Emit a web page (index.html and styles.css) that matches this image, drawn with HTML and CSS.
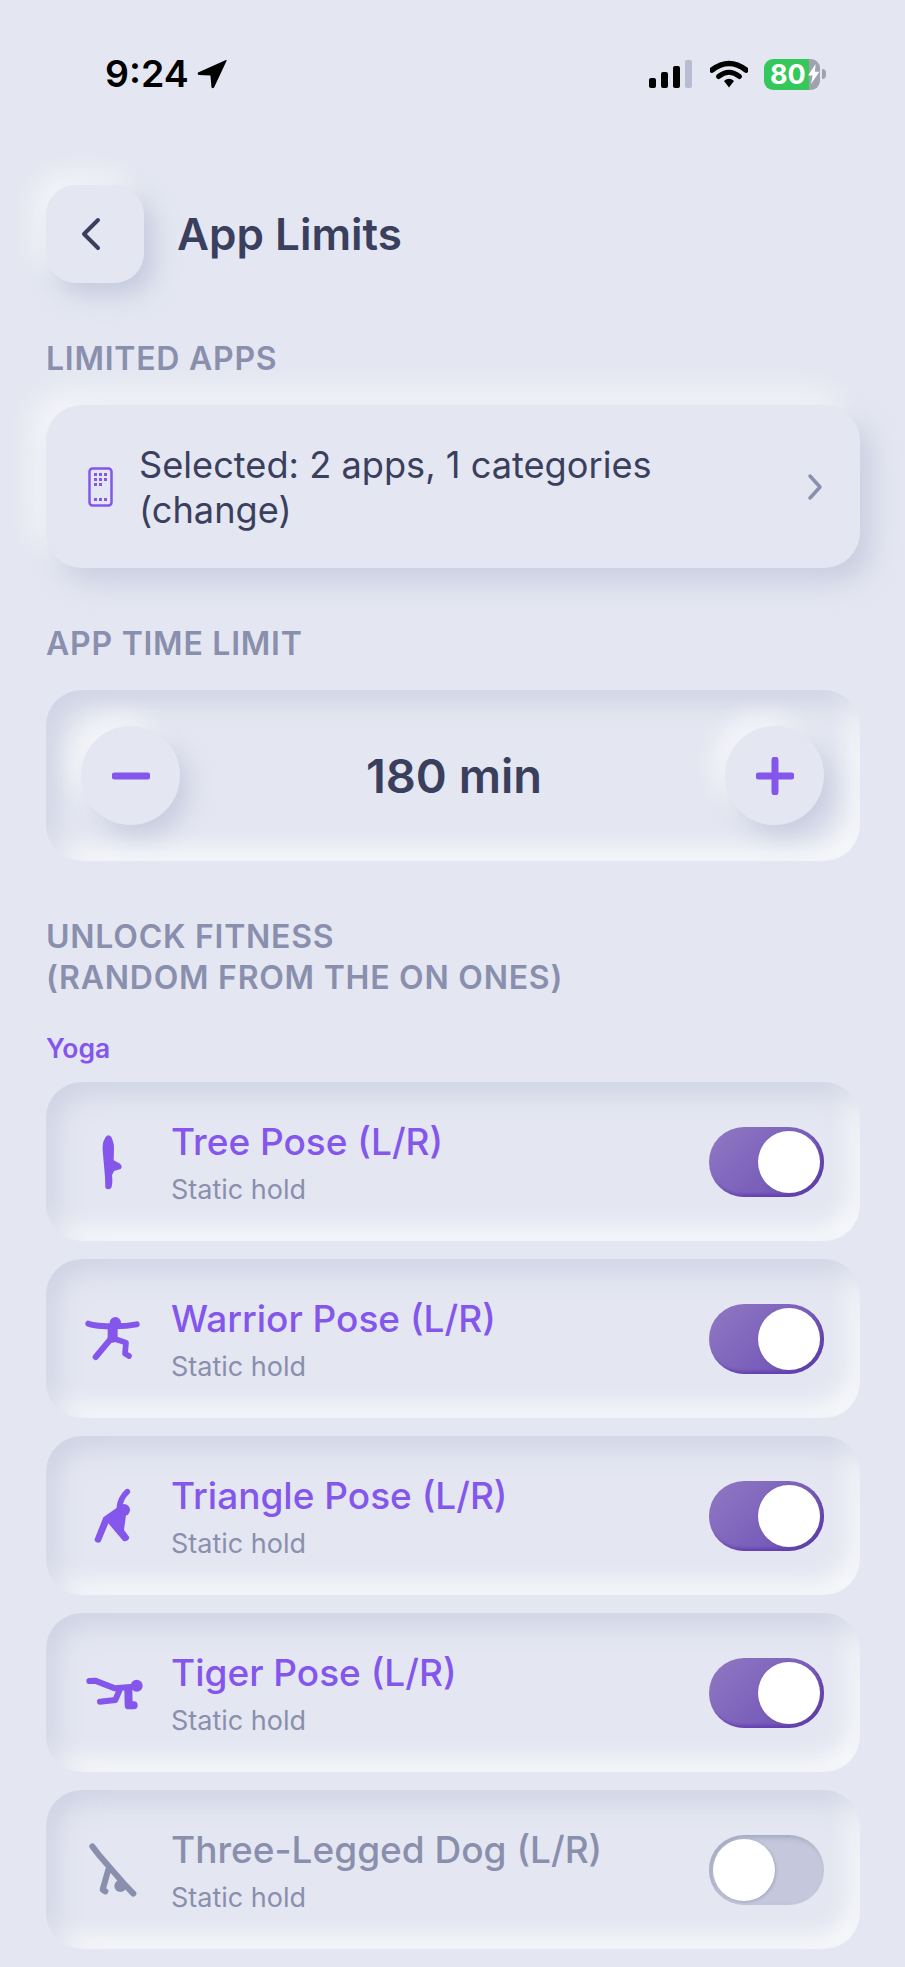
FILE: index.html
```html
<!DOCTYPE html>
<html lang="en">
<head>
<meta charset="utf-8">
<title>App Limits</title>
<link rel="stylesheet" href="styles.css">
</head>
<body>
<div class="page">
  <div class="status">
    <div class="status-left">
      <span class="time">9:24</span>
      <svg class="loc" viewBox="0 0 29 29"><path d="M28 1 L1 13 Q0 15 2 15.500 L13 16 L14 27.500 Q15 29 16.500 27.500 L28.500 2 Q29 0.500 28 1Z" fill="#000"/></svg>
    </div>
    <div class="status-right">
      <svg class="cell" viewBox="0 0 44 29"><rect x="0" y="18" width="7" height="10" rx="2" fill="#000"/><rect x="12" y="12" width="7" height="16" rx="2" fill="#000"/><rect x="24" y="6" width="7" height="22" rx="2" fill="#000"/><rect x="36" y="0" width="7" height="28" rx="2" fill="#b9bcd0"/></svg>
      <svg class="wifi" viewBox="0 0 38 29"><path d="M2 10 Q19 -3 36 10" fill="none" stroke="#000" stroke-width="5.500" stroke-linecap="round"/><path d="M8.500 16.500 Q19 8 29.500 16.500" fill="none" stroke="#000" stroke-width="5" stroke-linecap="round"/><path d="M14 21 Q19 16.500 24 21 L19 27.500Z" fill="#000"/></svg>
      <div class="battery">
        <div class="batt-body"><span class="batt-num">80</span><svg class="bolt" viewBox="0 0 16 26"><path d="M10 0 L0 15 H6 L4 26 L15 10 H9Z" fill="#fff"/></svg></div>
        <div class="batt-nub"></div>
      </div>
    </div>
  </div>

  <header class="header">
    <button class="back">
      <svg class="back-ico" viewBox="0 0 24 36"><path d="M19 4 L5 18 L19 32" fill="none" stroke="#3b3f5e" stroke-width="4" stroke-linecap="round" stroke-linejoin="round"/></svg>
    </button>
    <h1 class="title">App Limits</h1>
  </header>

  <div class="label">LIMITED APPS</div>
  <div class="picker">
    <svg class="phone" viewBox="0 0 25 40">
      <rect x="1.500" y="1.500" width="22" height="37" rx="3" fill="none" stroke="#8456ec" stroke-width="2.500"/>
      <g fill="#8456ec"><rect x="6" y="6" width="3" height="3"/><rect x="11" y="6" width="3" height="3"/><rect x="16" y="6" width="3" height="3"/><rect x="6" y="11" width="3" height="3"/><rect x="11" y="11" width="3" height="3"/><rect x="16" y="11" width="3" height="3"/><rect x="6" y="16" width="3" height="3"/><rect x="11" y="16" width="3" height="3"/><rect x="6" y="31" width="3" height="3"/><rect x="11" y="31" width="3" height="3"/><rect x="16" y="31" width="3" height="3"/></g>
    </svg>
    <div class="picker-text">Selected: 2 apps, 1 categories (change)</div>
    <svg class="chev" viewBox="0 0 18 28"><path d="M4 3 L14 14 L4 25" fill="none" stroke="#8a8fae" stroke-width="3.500" stroke-linecap="round" stroke-linejoin="round"/></svg>
  </div>

  <div class="label">APP TIME LIMIT</div>
  <div class="stepper">
    <button class="round">
      <svg class="step-ico" viewBox="0 0 38 38"><path d="M3 19 H35" stroke="#8456ec" stroke-width="7" stroke-linecap="round"/></svg>
    </button>
    <div class="value">180 min</div>
    <button class="round">
      <svg class="step-ico" viewBox="0 0 38 38"><path d="M3 19 H35 M19 3 V35" stroke="#8456ec" stroke-width="7" stroke-linecap="round"/></svg>
    </button>
  </div>

  <div class="label">UNLOCK FITNESS<br>(RANDOM FROM THE ON ONES)</div>
  <div class="group">Yoga</div>

  <div class="rows">
    <div class="row">
      <svg class="pose" viewBox="120 158 180 180"><path d="M197 170 Q205 160 214 170 L218 180 Q223 195 222 205 L221 240 L238 249 Q250 258 242 266 L222 272 L216 285 Q219 310 214 322 Q205 331 196 322 L195 290 L188 210 Q187 190 192 180Z" fill="#8456ec"/></svg>
      <div class="info"><div class="name">Tree Pose (L/R)</div><div class="sub">Static hold</div></div>
      <div class="toggle on"><span class="knob"></span></div>
    </div>
    <div class="row">
      <svg class="pose" viewBox="120 149 180 180"><g fill="none" stroke="#8456ec" stroke-linecap="round" stroke-linejoin="round"><path d="M145 190 Q165 198 225 198 Q260 198 290 192" stroke-width="18"/><path d="M212 236 L167 290" stroke-width="18"/><path d="M225 236 L258 247 L255 280 L267 287" stroke-width="17"/><path d="M218 205 V232" stroke-width="30"/></g><circle cx="226" cy="187" r="17" fill="#8456ec"/></svg>
      <div class="info"><div class="name">Warrior Pose (L/R)</div><div class="sub">Static hold</div></div>
      <div class="toggle on"><span class="knob"></span></div>
    </div>
    <div class="row">
      <svg class="pose" viewBox="120 141 180 180"><path d="M262 155 Q240 175 238 205" fill="none" stroke="#8456ec" stroke-width="17" stroke-linecap="round"/><circle cx="252" cy="210" r="18" fill="#8456ec"/><path d="M190 232 L235 200 L258 225 L252 270 L268 292 Q265 306 250 303 L205 250 L182 305 Q170 313 163 300Z" fill="#8456ec"/></svg>
      <div class="info"><div class="name">Triangle Pose (L/R)</div><div class="sub">Static hold</div></div>
      <div class="toggle on"><span class="knob"></span></div>
    </div>
    <div class="row">
      <svg class="pose" viewBox="120 132 180 180"><g fill="none" stroke="#8456ec" stroke-linecap="round" stroke-linejoin="round"><path d="M148 183 L165 182 L225 205 L280 200" stroke-width="18"/><path d="M238 212 L226 240 L180 245" stroke-width="18"/><path d="M265 212 L266 256 L281 256" stroke-width="24"/></g><circle cx="290" cy="197" r="18" fill="#8456ec"/></svg>
      <div class="info"><div class="name">Tiger Pose (L/R)</div><div class="sub">Static hold</div></div>
      <div class="toggle on"><span class="knob"></span></div>
    </div>
    <div class="row off">
      <svg class="pose" viewBox="120 154 180 180"><g fill="none" stroke="#8a8fae" stroke-linecap="round" stroke-linejoin="round"><path d="M157 170 L180 200 L250 280 L280 312" stroke-width="18"/><path d="M205 240 L188 300 L196 305" stroke-width="18"/></g><circle cx="241" cy="289" r="18" fill="#8a8fae"/></svg>
      <div class="info"><div class="name">Three-Legged Dog (L/R)</div><div class="sub">Static hold</div></div>
      <div class="toggle"><span class="knob"></span></div>
    </div>
  </div>
</div>
</body>
</html>
```
FILE: styles.css
```css
* { box-sizing: border-box; }
html, body { margin: 0; padding: 0; background: #e4e7f1; }
body { font-family: Inter, "Noto Sans", sans-serif; color: #3b3f5e; }
.page { width: 905px; height: 1967px; overflow: hidden; padding: 56px 45px 0 46px; }

.status { display: flex; justify-content: space-between; align-items: center; height: 36px; padding: 0 34px 0 59px; }
.status-left { display: flex; align-items: center; gap: 8px; }
.time { font-size: 37.5px; font-weight: 600; color: #000; line-height: 36px; }
.loc { width: 30px; height: 30px; margin-top: -1px; }
.status-right { display: flex; align-items: center; }
.cell { width: 44px; height: 29px; }
.wifi { width: 38px; height: 29px; margin-left: 17px; }
.battery { display: flex; align-items: center; margin-left: 16px; }
.batt-body { width: 56px; height: 31px; border-radius: 9px; display: flex; align-items: center; padding-left: 6px; background: linear-gradient(90deg, #34c759 0, #34c759 80%, #a0a2b0 80%); }
.batt-num { font-size: 27px; font-weight: 700; color: #fff; line-height: 31px; }
.bolt { width: 14px; height: 24px; margin-left: 2px; }
.batt-nub { width: 4px; height: 10px; margin-left: 2px; border-radius: 0 5px 5px 0; background: #a0a2b0; }

.header { display: flex; align-items: center; gap: 33px; margin-top: 93px; }
.back { width: 98px; height: 98px; border: 0; border-radius: 30px; background: #e4e7f1; padding: 0; display: flex; align-items: center; justify-content: center; box-shadow: 10px 12px 22px rgba(170, 176, 205, .5), -12px -12px 24px rgba(255, 255, 255, .6); }
.back-ico { width: 24px; height: 36px; margin-right: 9px; }
.title { margin: 0; font-size: 44px; line-height: 50px; font-weight: 600; color: #3b3f5e; }

.label { margin: 55px 0 26px; font-size: 32px; line-height: 41px; font-weight: 600; letter-spacing: .75px; color: #8a8fae; }

.picker { display: flex; align-items: center; height: 163px; border-radius: 36px; padding: 0 36px 0 42px; box-shadow: 12px 14px 26px rgba(170, 176, 205, .45), -14px -14px 28px rgba(255, 255, 255, .6); }
.phone { width: 25px; height: 40px; flex: none; }
.picker-text { flex: 1; margin-left: 26px; padding-top: 2px; font-size: 36.2px; line-height: 45px; color: #3b3f5e; }
.chev { width: 18px; height: 28px; flex: none; }

.stepper { display: flex; align-items: center; justify-content: space-between; height: 171px; border-radius: 36px; padding: 0 36px 0 35px; box-shadow: inset 10px 12px 24px rgba(170, 176, 205, .36), inset -10px -12px 22px rgba(255, 255, 255, .8); }
.round { width: 99px; height: 99px; border: 0; border-radius: 50%; padding: 0; background: #e4e7f1; display: flex; align-items: center; justify-content: center; box-shadow: 10px 12px 22px rgba(170, 176, 205, .45), -12px -12px 22px rgba(255, 255, 255, .6); }
.step-ico { width: 38px; height: 38px; }
.value { margin-left: 3px; font-size: 47px; font-weight: 600; line-height: 56px; color: #3b3f5e; }

.group { margin-top: 33px; font-size: 26.5px; line-height: 34px; font-weight: 600; color: #8456ec; }

.rows { display: flex; flex-direction: column; gap: 18px; margin-top: 17px; }
.row { display: flex; align-items: center; height: 159px; border-radius: 36px; padding: 2px 36px 0 34px; box-shadow: inset 10px 12px 24px rgba(170, 176, 205, .36), inset -10px -12px 22px rgba(255, 255, 255, .8); }
.pose { width: 60px; height: 60px; flex: none; overflow: visible; }
.info { flex: 1; margin-left: 31px; }
.name { font-size: 37px; line-height: 46px; font-weight: 500; color: #8456ec; }
.sub { margin-top: 8px; font-size: 27px; line-height: 34px; color: #8a8fae; }
.off .name { color: #8a8fae; }

.toggle { width: 115px; height: 70px; margin-top: -2px; border-radius: 35px; padding: 4px; display: flex; background: #c5c8dc; box-shadow: inset 3px 3px 5px rgba(110, 114, 145, .35); }
.toggle.on { justify-content: flex-end; background: linear-gradient(135deg, #9079c2, #6b4db6); box-shadow: inset -3px -3px 3px rgba(90, 50, 170, .6); }
.knob { width: 62px; height: 62px; border-radius: 50%; background: #fff; box-shadow: 1px 1px 3px rgba(80, 80, 120, .3); }
```
